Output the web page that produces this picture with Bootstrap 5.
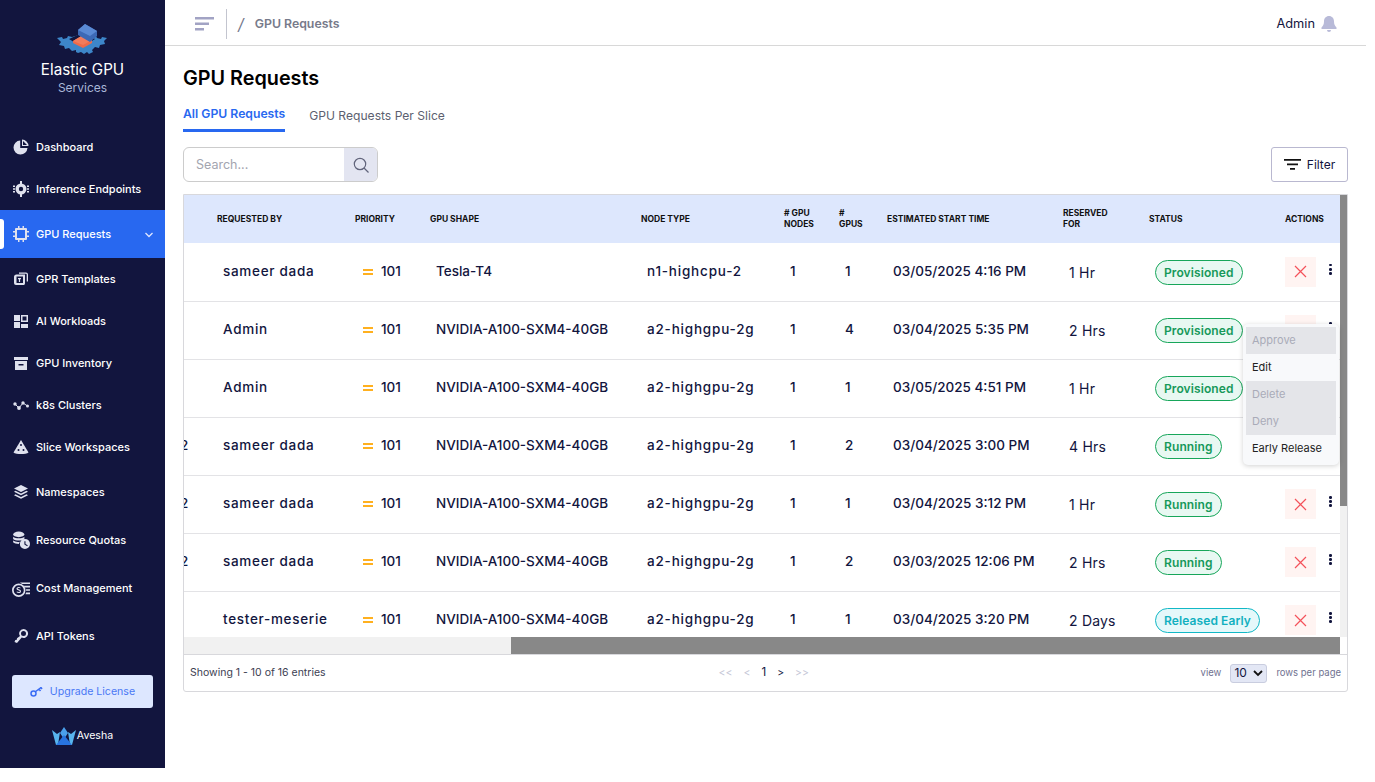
<!DOCTYPE html>
<html lang="en"><head><meta charset="utf-8"><title>GPU Requests</title>
<link rel="stylesheet" href="https://cdn.jsdelivr.net/npm/bootstrap@5.3.0/dist/css/bootstrap.min.css">
<style>
html,body{height:768px;overflow:hidden;background:#fff}
body{font-family:Inter,"Liberation Sans",sans-serif;color:#12153e}
.app-shell{width:1366px;height:768px}
.side-bar{width:165px;background:#12153e;color:#fff;height:768px;flex:none}
.brand-box{height:126px;padding-top:24px;text-align:center}
.brand-logo{display:block;margin:0 auto 5px 57px}
.brand-name{font-size:15.2px;line-height:18px;color:#fff}
.brand-sub{font-size:12px;line-height:18px;color:#a9b6d8}
.menu-row{position:relative;display:flex;align-items:center;gap:7px;padding-left:13px;color:#fff;font-size:11px;font-weight:500;white-space:nowrap;text-decoration:none;height:42px}
.menu-row svg{flex:none;width:16px;height:16px;fill:#dfe1ee}
.menu-row.on{background:#2868f0;height:48px;margin:0}
.menu-row.on::before{content:"";position:absolute;left:0;top:9px;width:4px;height:30px;background:#fff;border-radius:0 3px 3px 0}
.menu-row.on svg.cv{position:absolute;left:144px;top:21px;width:10px;height:8px;fill:none;stroke:#dfe6ff}
.upgrade-btn{width:141px;height:33px;margin:0 0 0 12px;background:#dde7ff;color:#4a78f5;font-size:10.6px;font-weight:400;border:0;border-radius:3px;display:flex;align-items:center;justify-content:center;gap:7px}
.ave-logo{color:#fff;font-size:10.6px;gap:1px;margin-top:19px}
.main-pane{width:1201px}
.top-strip{height:46px;border-bottom:1px solid #d8d8d8;padding:2px 29px 0 30px}
.bar-sep{width:1px;height:30px;background:#c3c5cf;margin:0 11px}
.crumb{font-size:12.3px;font-weight:600;color:#777a8a;margin-top:2px}
.crumb-slash{font-size:16px;color:#73768a;font-style:italic;margin-right:11px}
.who{font-size:12.8px;color:#12153e;margin-right:6px}
.page-wrap{padding:19px 18px 0}
.page-title{font-size:19.8px;font-weight:600;color:#000;line-height:26px;margin:0 0 12px}
.tab-row{gap:24px;margin-bottom:15px}
.tab-item{font-size:12.1px;color:#5c5f70;line-height:18px}
.tab-item.sel{color:#2868f0;font-weight:600;border-bottom:3px solid #2868f0;padding:2px 0 6px;font-size:12.2px}
.tab-item.plain{padding-top:4px}
.find-box{width:195px;height:35px;border:1px solid #ccc;border-radius:6px;overflow:hidden}
.find-box span{flex:1;padding-left:12px;font-size:12.5px;color:#a3a5b0;line-height:33px}
.find-box i{width:33px;background:#e3e5f1;display:flex;align-items:center;justify-content:center}
.filter-btn{width:77px;height:35px;border:1px solid #b9b8d0;border-radius:3px;background:#fff;font-size:12px;color:#12153e;gap:6px}
.grid-card{margin-top:12px;width:1165px;height:498px;border:1px solid #d8d8dc;border-radius:0 0 3px 3px;position:relative;overflow:hidden}
.grid-view{position:relative;height:459px;overflow:hidden}
.data-tb{width:1156px;margin:0;table-layout:fixed;border-collapse:collapse}
.data-tb th{background:#dde7fd;height:48px;font-size:8.5px;font-weight:700;color:#111;text-transform:uppercase;line-height:11px;padding:0;vertical-align:middle;border:0}
.data-tb td{height:58px;font-size:13.5px;color:#12153e;padding:0 0 2px 6px;border:0;border-bottom:1px solid #e3e3e6;vertical-align:middle;white-space:nowrap;font-weight:500;background:#fff}
.data-tb td.lt{font-weight:400;font-size:14px;padding-top:1px;padding-bottom:0;letter-spacing:.2px}
.data-tb td.who-col{letter-spacing:.7px}
.data-tb td.node-col{letter-spacing:.8px}
.cut-cell{position:relative}
.cut-num{position:absolute;left:-4px;top:50%;margin-top:-1px;transform:translateY(-50%);font-size:13.5px}
.eq-mark{display:inline-block;width:10px;height:6px;border-top:2px solid #ffb01f;border-bottom:2px solid #ffb01f;margin:0 8px 0 2px;vertical-align:1px}
.st-pill{display:inline-block;border:1px solid #17a65a;background:#e8f8f2;color:#17995a;border-radius:13px;font-size:12px;font-weight:600;line-height:23px;height:25px;padding:0 8px;margin-top:3px;letter-spacing:.1px}
.st-pill.cy{border-color:#12b8c6;background:#e5f8fa;color:#12b0c0}
.x-tile{display:inline-flex;width:31px;height:30px;background:#fff4f2;align-items:center;justify-content:center}
.dot-kebab{position:absolute;right:6px;top:7px;display:flex;flex-direction:column;gap:1.6px}
.dot-kebab b{width:2.6px;height:2.6px;border-radius:50%;background:#12153e;display:block}
.act-wrap{position:relative;display:inline-block;padding-right:22px}
.sb-v{position:absolute;right:0;top:0;width:7px;height:442px;background:#f1f1f1}
.sb-v b{display:block;width:7px;height:311px;background:#888}
.sb-h{position:absolute;left:0;bottom:0;height:17px;width:1156px;background:#f1f1f1}
.sb-h b{display:block;margin-left:327px;width:829px;height:17px;background:#888}
.grid-foot{height:37px;border-top:1px solid #d8d8dc;padding:0 6px;font-size:10.5px;color:#3c3e52}
.page-num{gap:11px;color:#c4c6d6;font-size:10.5px;margin-left:393px}
.page-num em{font-style:normal;color:#12153e;font-size:11.5px}
.page-num u{text-decoration:none;color:#12153e}
.rows-lbl{color:#6f7290;font-size:9.5px}
.rows-sel{width:37px;height:19px;background:#e3e7f5;border:1px solid #c9cddf;border-radius:3px;font-size:12px;color:#12153e;padding:0 3px;margin:0 9px;justify-content:space-between}
.act-menu{position:absolute;left:1059px;top:129px;width:96px;height:141px;background:#f8f9fb;border-radius:5px;box-shadow:0 1px 5px rgba(0,0,0,.18);padding:3px;z-index:5;font-size:11px;color:#222}
.act-menu div{height:27px;line-height:27px;padding-left:6px;white-space:nowrap}
.act-menu .off{background:#e4e5e9;color:#a9abb8}
</style></head><body>
<div class="app-shell d-flex">
<aside class="side-bar d-flex flex-column">
 <div class="brand-box">
  <svg class="brand-logo" width="50" height="32" viewBox="0 0 50 32"><path d="M0 14l5-1 1 2 4-1 1-2 4 1 10-3 10 3 4-1 1 2 4 1 1-2 5 1-3 3 1 3-5 1-1 3-4-1-3 3 1 2-4 2-2-2-3 2-3-2-3 1-2-1 0-2-4 1-3-3-4 1-1-3-5-1 2-3z" fill="#3d86c9"/><path d="M12 15l13-6 13 6-13 8z" fill="#12153e"/><path d="M16 17l10-6 9 5v3l-9 5-10-5z" fill="#ee6a4a"/><path d="M16 17l10-6 9 5-9 5z" fill="#f27c5c"/><path d="M21 6l7-6 12 7v5l-7 6-12-7z" fill="#3c69b5"/><path d="M21 6l7-6 12 7-7 5z" fill="#5a8ad4"/></svg>
  <div class="brand-name">Elastic GPU</div><div class="brand-sub">Services</div>
 </div>
 <a class="menu-row"><svg viewBox="0 0 16 16"><path d="M7.2 1.500A7 7 0 1 0 14.500 9H7.200z"/><path d="M9 .5V7h6.500A6.600 6.600 0 0 0 9 .5zm1 1.400L14 6h-4z"/></svg>Dashboard</a>
 <a class="menu-row"><svg viewBox="0 0 16 16"><path d="M7 0h2v3H7zM7 13h2v3H7zM0 4.500h2V6H0zM0 7.300h2v1.400H0zM0 10h2v1.500H0zM14 4.500h2V6h-2zM14 7.300h2v1.400h-2zM14 10h2v1.500h-2z"/><path fill-rule="evenodd" d="M8 2.500a5.500 5.500 0 1 1 0 11 5.500 5.500 0 0 1 0-11zm0 3.300a2.200 2.200 0 1 0 0 4.400 2.200 2.200 0 0 0 0-4.400z"/></svg>Inference Endpoints</a>
 <a class="menu-row on"><svg viewBox="0 0 16 16"><path fill-rule="evenodd" d="M3 2h10a1 1 0 0 1 1 1v10a1 1 0 0 1-1 1H3a1 1 0 0 1-1-1V3a1 1 0 0 1 1-1zm1 2v8h8V4z"/><path d="M5 0h1.500v2H5zM9.500 0H11v2H9.500zM5 14h1.500v2H5zM9.500 14H11v2H9.500zM0 5h2v1.500H0zM0 9.500h2V11H0zM14 5h2v1.500h-2zM14 9.500h2V11h-2z"/></svg>GPU Requests<svg class="cv" viewBox="0 0 10 8"><path d="M1.500 2L5 5.500 8.500 2" stroke-width="1.300"/></svg></a>
 <a class="menu-row"><svg viewBox="0 0 16 16"><path fill-rule="evenodd" d="M6 1.500h7a2 2 0 0 1 2 2v7h-1.300v-7a.7.7 0 0 0-.7-.7H6z"/><path fill-rule="evenodd" d="M3.500 3.500H12V12a2 2 0 0 1-1 2H3a2 2 0 0 1-2-2V6a2.500 2.500 0 0 1 2.500-2.500zM3.500 5.500V12h6.500V5.500z"/><path d="M5 7h3v1.200H7.100V11H5.900V8.200H5z"/></svg>GPR Templates</a>
 <a class="menu-row"><svg viewBox="0 0 16 16"><path d="M1 2h6v6H1zM1 9h6v6H1zM8 11h7v4H8z"/><path fill-rule="evenodd" d="M8 2h7v7H8zm1.500 1.500V7.500h4V3.500z"/></svg>AI Workloads</a>
 <a class="menu-row"><svg viewBox="0 0 16 16"><path d="M1 2h14v3H1z"/><path fill-rule="evenodd" d="M2 6h12v9H2zm3.500 3v1.500h5V9z"/></svg>GPU Inventory</a>
 <a class="menu-row"><svg viewBox="0 0 16 16"><circle cx="2" cy="7" r="1.700"/><circle cx="6" cy="11" r="1.900"/><circle cx="10" cy="6" r="1.700"/><circle cx="14.500" cy="9" r="1.500"/><path d="M2 7l4 4 4-5 4.500 3" fill="none" stroke="#dfe1ee"/></svg>k8s Clusters</a>
 <a class="menu-row"><svg viewBox="0 0 16 16"><path d="M8 1l7.500 12.500C13 15.500 3 15.500.5 13.500z"/><circle cx="8" cy="6" r="1" fill="#12153e"/><circle cx="5.500" cy="11" r="1" fill="#12153e"/><circle cx="10.500" cy="11" r="1" fill="#12153e"/></svg>Slice Workspaces</a>
 <a class="menu-row" style="margin-top:3px"><svg viewBox="0 0 16 16"><path d="M8 1l7 3.500L8 8 1 4.500z"/><path d="M2.500 6.800L8 9.500l5.500-2.700L15 7.800 8 11.300 1 7.800z"/><path d="M2.500 10.300L8 13l5.500-2.700 1.500 1L8 14.800 1 11.300z"/></svg>Namespaces</a>
 <a class="menu-row" style="height:48px;margin-top:3px"><svg viewBox="0 0 16 16" style="width:18px;height:18px;margin-left:-1px;margin-right:-1px"><ellipse cx="6" cy="3" rx="5" ry="2.500"/><path d="M1 5c2 2 8 2 10 0v2c-2 2-8 2-10 0zM1 8.500c1.500 1 4 1.500 6 1l-1 2c-2 0-4-.5-5-1.500z"/><path fill-rule="evenodd" d="M11.500 7a4.500 4.500 0 1 1 0 9 4.500 4.500 0 0 1 0-9zm-.5 2v3l2.500 1.500.5-.8-2-1.200V9z"/></svg>Resource Quotas</a>
 <a class="menu-row" style="height:48px"><svg viewBox="0 0 16 16" style="width:18px;height:18px;margin-left:-1px;margin-right:-1px"><path fill-rule="evenodd" d="M6 4a6 6 0 1 1 0 12A6 6 0 0 1 6 4zm0 1.500a4.500 4.500 0 1 0 0 9 4.500 4.500 0 0 0 0-9z"/><path d="M6 7c-1.500 0-2 1-2 1.500C4 10.500 7 10 7 11c0 .7-2 .5-2.800 0v1c.9.500 3.800.7 3.800-1 0-2-3-1.500-3-2.500 0-.5 1.500-.6 2.500-.1V7.500C7 7.200 6.500 7 6 7zM7 3h9v1.500H9zM10 6h6v1.500h-4.500zM12.500 9H16v1.500h-3.500zM12.500 12H16v1.500h-4z"/></svg>Cost Management</a>
 <a class="menu-row" style="height:48px"><svg viewBox="0 0 16 16"><path fill-rule="evenodd" d="M10.500 1a4.500 4.500 0 1 1-1.800 8.600L4 15l-2.500-1 .8-2 1.500-.2.200-1.500 3-2.200A4.500 4.500 0 0 1 10.500 1zm0 2a2.500 2.500 0 1 0 0 5 2.500 2.500 0 0 0 0-5z"/></svg>API Tokens</a>
 <div style="height:15px"></div>
 <button class="upgrade-btn" type="button"><svg width="13" height="11" viewBox="0 0 13 11"><circle cx="3.500" cy="7.500" r="2.500" fill="none" stroke="#3a6cf4" stroke-width="1.500"/><path d="M5 6l6-4.500M9 3l1.500 2M11 1.500l1 1.500" stroke="#3a6cf4" stroke-width="1.500" fill="none"/></svg>Upgrade License</button>
 <div class="ave-logo d-flex align-items-center justify-content-center"><svg width="24" height="18" viewBox="0 0 24 18"><path d="M0 3l5 4 3-2-2 13H4z" fill="#58b4ee"/><path d="M12 0l4 6-4 6-4-6z" fill="#4aa0ec"/><path d="M24 3l-5 4-3-2 2 13h2z" fill="#58b4ee"/><path d="M4 18L12 8l8 10z" fill="#2874e0"/></svg><span>Avesha</span></div>
</aside>
<main class="main-pane">
 <header class="top-strip d-flex align-items-center">
  <svg width="20" height="14" viewBox="0 0 20 14"><path d="M0 0h19v2.500H0zM0 5.500h14V8H0zM0 11h9v2.500H0z" fill="#a2a3c4"/></svg>
  <span class="bar-sep"></span><span class="crumb-slash">/</span><span class="crumb">GPU Requests</span>
  <span class="who ms-auto">Admin</span>
  <svg width="16" height="16" viewBox="0 0 16 16"><path d="M8 0c3 0 5 2.300 5 5.500 0 3 1 4.500 2.500 6V13H.5v-1.500C2 10 3 8.500 3 5.500 3 2.300 5 0 8 0zM6 14h4a2 2 0 0 1-4 0z" fill="#b8bad8"/></svg>
 </header>
 <div class="page-wrap">
  <h1 class="page-title">GPU Requests</h1>
  <div class="tab-row d-flex align-items-start"><div class="tab-item sel">All GPU Requests</div><div class="tab-item plain">GPU Requests Per Slice</div></div>
  <div class="d-flex justify-content-between">
   <div class="find-box d-flex"><span>Search...</span><i><svg width="16" height="16" viewBox="0 0 16 16"><circle cx="7" cy="7" r="5.700" fill="none" stroke="#62657c" stroke-width="1.200"/><path d="M11 11l4.500 4.500" stroke="#62657c" stroke-width="1.200"/></svg></i></div>
   <button class="filter-btn d-flex align-items-center justify-content-center" type="button"><svg width="17" height="11" viewBox="0 0 17 11"><path d="M0 0h17v1.800H0zM3 4.500h11v1.800H3zM6 9h5v1.800H6z" fill="#111"/></svg>Filter</button>
  </div>
  <div class="grid-card">
   <div class="grid-view">
    <table class="data-tb">
     <colgroup><col style="width:33px"><col style="width:138px"><col style="width:75px"><col style="width:211px"><col style="width:143px"><col style="width:55px"><col style="width:48px"><col style="width:176px"><col style="width:86px"><col style="width:136px"><col style="width:55px"></colgroup>
     <thead><tr><th></th><th>Requested By</th><th>Priority</th><th>GPU Shape</th><th>Node Type</th><th># GPU<br>Nodes</th><th>#<br>GPUs</th><th>Estimated Start Time</th><th>Reserved<br>For</th><th>Status</th><th>Actions</th></tr></thead>
     <tbody id="rows"></tbody>
    </table>
    <div class="sb-h"><b></b></div>
    <div class="sb-v"><b></b></div>
   </div>
   <div class="grid-foot d-flex align-items-center">
    <span>Showing 1 - 10 of 16 entries</span>
    <span class="page-num d-flex align-items-center"><span>&lt;&lt;</span><span>&lt;</span><em>1</em><u>&gt;</u><span>&gt;&gt;</span></span>
    <span class="rows-lbl ms-auto">view</span><span class="rows-sel d-flex align-items-center"><span>10</span><svg width="10" height="7" viewBox="0 0 10 7"><path d="M1 1l4 4 4-4" fill="none" stroke="#111" stroke-width="1.800"/></svg></span><span class="rows-lbl">rows per page</span>
   </div>
   <div class="act-menu"><div class="off">Approve</div><div>Edit</div><div class="off">Delete</div><div class="off">Deny</div><div>Early Release</div></div>
  </div>
 </div>
</main>
</div>
<script>
const d=[["","sameer dada","Tesla-T4","n1-highcpu-2","1","1","03/05/2025 4:16 PM","1 Hr","Provisioned",""],["","Admin","NVIDIA-A100-SXM4-40GB","a2-highgpu-2g","1","4","03/04/2025 5:35 PM","2 Hrs","Provisioned",""],["","Admin","NVIDIA-A100-SXM4-40GB","a2-highgpu-2g","1","1","03/05/2025 4:51 PM","1 Hr","Provisioned",""],["2","sameer dada","NVIDIA-A100-SXM4-40GB","a2-highgpu-2g","1","2","03/04/2025 3:00 PM","4 Hrs","Running",""],["2","sameer dada","NVIDIA-A100-SXM4-40GB","a2-highgpu-2g","1","1","03/04/2025 3:12 PM","1 Hr","Running",""],["2","sameer dada","NVIDIA-A100-SXM4-40GB","a2-highgpu-2g","1","2","03/03/2025 12:06 PM","2 Hrs","Running",""],["","tester-meserie","NVIDIA-A100-SXM4-40GB","a2-highgpu-2g","1","1","03/04/2025 3:20 PM","2 Days","Released Early","cy"]];
document.getElementById("rows").innerHTML=d.map(r=>`<tr><td class="cut-cell p-0"><span class="cut-num">${r[0]}</span></td><td class="who-col">${r[1]}</td><td><span class="eq-mark"></span>101</td><td>${r[2]}</td><td class="node-col">${r[3]}</td><td>${r[4]}</td><td>${r[5]}</td><td>${r[6]}</td><td class="lt">${r[7]}</td><td><span class="st-pill ${r[9]}">${r[8]}</span></td><td class="p-0"><span class="act-wrap"><span class="x-tile"><svg width="13" height="13" viewBox="0 0 13 13"><path d="M1 1l11 11M12 1L1 12" stroke="#f4515a" stroke-width="1.200"/></svg></span><span class="dot-kebab"><b></b><b></b><b></b></span></span></td></tr>`).join("");
</script>
<script src="https://cdn.jsdelivr.net/npm/bootstrap@5.3.0/dist/js/bootstrap.bundle.min.js"></script>
</body></html>
